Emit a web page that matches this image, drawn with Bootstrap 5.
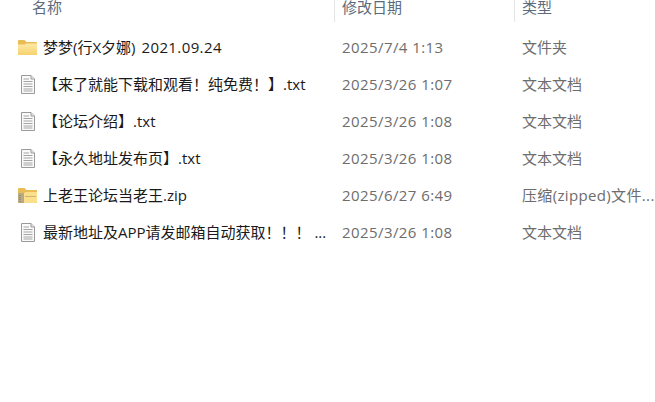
<!DOCTYPE html>
<html lang="zh"><head><meta charset="utf-8"><title>文件列表</title>
<link href="https://cdn.jsdelivr.net/npm/bootstrap@5.3.0/dist/css/bootstrap.min.css" rel="stylesheet">
<style>
html,body{height:100%;overflow:hidden;background:#fff}
body{font-family:"Open Sans","Noto Sans CJK SC",sans-serif;font-size:15px;color:#1a1a1a}
.hdr{height:22px;color:#5b6b7c}
.hdr .c1,.hdr .c2,.hdr .c3{line-height:15px;align-self:flex-start}
.hdr .c2,.hdr .c3{height:22px;border-left:1px solid #e5e5e5}
.c1{width:334px;flex:none}
.c2{width:180px;flex:none;padding-left:7px}
.c3{flex:1 1 0;min-width:0;padding-left:7px;white-space:nowrap}
.hdr .c1{padding-left:32px}
.rows{padding-top:7px}
.rw{height:37px}
.rw .c1{padding-left:18px;gap:6px}
.ic{width:19px;height:19px;flex:none}
.rw .c2,.rw .c3{color:#6d6d6d}
.rw .c2{padding-left:8px;letter-spacing:.42px}
.rw .c3{padding-left:8px}
.nm{white-space:nowrap}
.ver{letter-spacing:.4px;margin-left:2px}
.zpd{letter-spacing:.35px}
</style></head><body>
<svg width="0" height="0" class="d-block"><defs>
<linearGradient id="fg" x1="0" y1="0" x2="0" y2="1"><stop offset="0" stop-color="#fde9a6"/><stop offset="1" stop-color="#f6d26e"/></linearGradient>
<symbol id="fd" viewBox="0 0 19 19"><path d="M0 3Q0 2 1 2H6.5L8.5 4H18Q19 4 19 5V16Q19 17 18 17H1Q0 17 0 16Z" fill="#e9bd55"/><path d="M0 6.5H7L8 5.5H19V16Q19 17 18 17H1Q0 17 0 16Z" fill="url(#fg)"/></symbol>
<symbol id="tx" viewBox="0 0 19 19"><path d="M3.5 .5H13L16.5 4V18.5H3.5Z" fill="#fafafa" stroke="#9a9a9a"/><path d="M13 .5V4H16.5" fill="#e8e8e8" stroke="#9a9a9a"/><path d="M5.5 4H11M5.5 6.5H14.5M5.5 9H14.5M5.5 11.5H14.5M5.5 14H14.5M5.5 16H14.5" stroke="#a4a4a4"/></symbol>
<symbol id="zp" viewBox="0 0 19 19"><path d="M0 3Q0 2 1 2H6.5L8.5 4H19V16Q19 17 18 17H1Q0 17 0 16Z" fill="#e8bd55"/><path d="M0 7H6L7.5 6H19V16Q19 17 18 17H1Q0 17 0 16Z" fill="#fbdf8a"/><path d="M0 7H6V17H1Q0 17 0 16Z" fill="#b7aa84"/><path d="M7.5 10.5H18" stroke="#9a8a5c" stroke-dasharray="1 1"/><path d="M2 9V16" stroke="#77705c" stroke-dasharray="1 1"/></symbol>
</defs></svg>
<div class="hdr d-flex"><div class="c1">名称</div><div class="c2">修改日期</div><div class="c3">类型</div></div>
<div class="rows">
<div class="rw d-flex align-items-center"><div class="c1 d-flex align-items-center"><svg class="ic"><use href="#fd"/></svg><span class="nm">梦梦(行X夕娜) <span class="ver">2021.09.24</span></span></div><div class="c2">2025/7/4 1:13</div><div class="c3">文件夹</div></div>
<div class="rw d-flex align-items-center"><div class="c1 d-flex align-items-center"><svg class="ic"><use href="#tx"/></svg><span class="nm">【来了就能下载和观看！纯免费！】.txt</span></div><div class="c2">2025/3/26 1:07</div><div class="c3">文本文档</div></div>
<div class="rw d-flex align-items-center"><div class="c1 d-flex align-items-center"><svg class="ic"><use href="#tx"/></svg><span class="nm">【论坛介绍】.txt</span></div><div class="c2">2025/3/26 1:08</div><div class="c3">文本文档</div></div>
<div class="rw d-flex align-items-center"><div class="c1 d-flex align-items-center"><svg class="ic"><use href="#tx"/></svg><span class="nm">【永久地址发布页】.txt</span></div><div class="c2">2025/3/26 1:08</div><div class="c3">文本文档</div></div>
<div class="rw d-flex align-items-center"><div class="c1 d-flex align-items-center"><svg class="ic"><use href="#zp"/></svg><span class="nm">上老王论坛当老王.zip</span></div><div class="c2">2025/6/27 6:49</div><div class="c3 zpd">压缩(zipped)文件...</div></div>
<div class="rw d-flex align-items-center"><div class="c1 d-flex align-items-center"><svg class="ic"><use href="#tx"/></svg><span class="nm">最新地址及APP请发邮箱自动获取！！！ ...</span></div><div class="c2">2025/3/26 1:08</div><div class="c3">文本文档</div></div>
</div>
<script src="https://cdn.jsdelivr.net/npm/bootstrap@5.3.0/dist/js/bootstrap.bundle.min.js"></script>
</body></html>
